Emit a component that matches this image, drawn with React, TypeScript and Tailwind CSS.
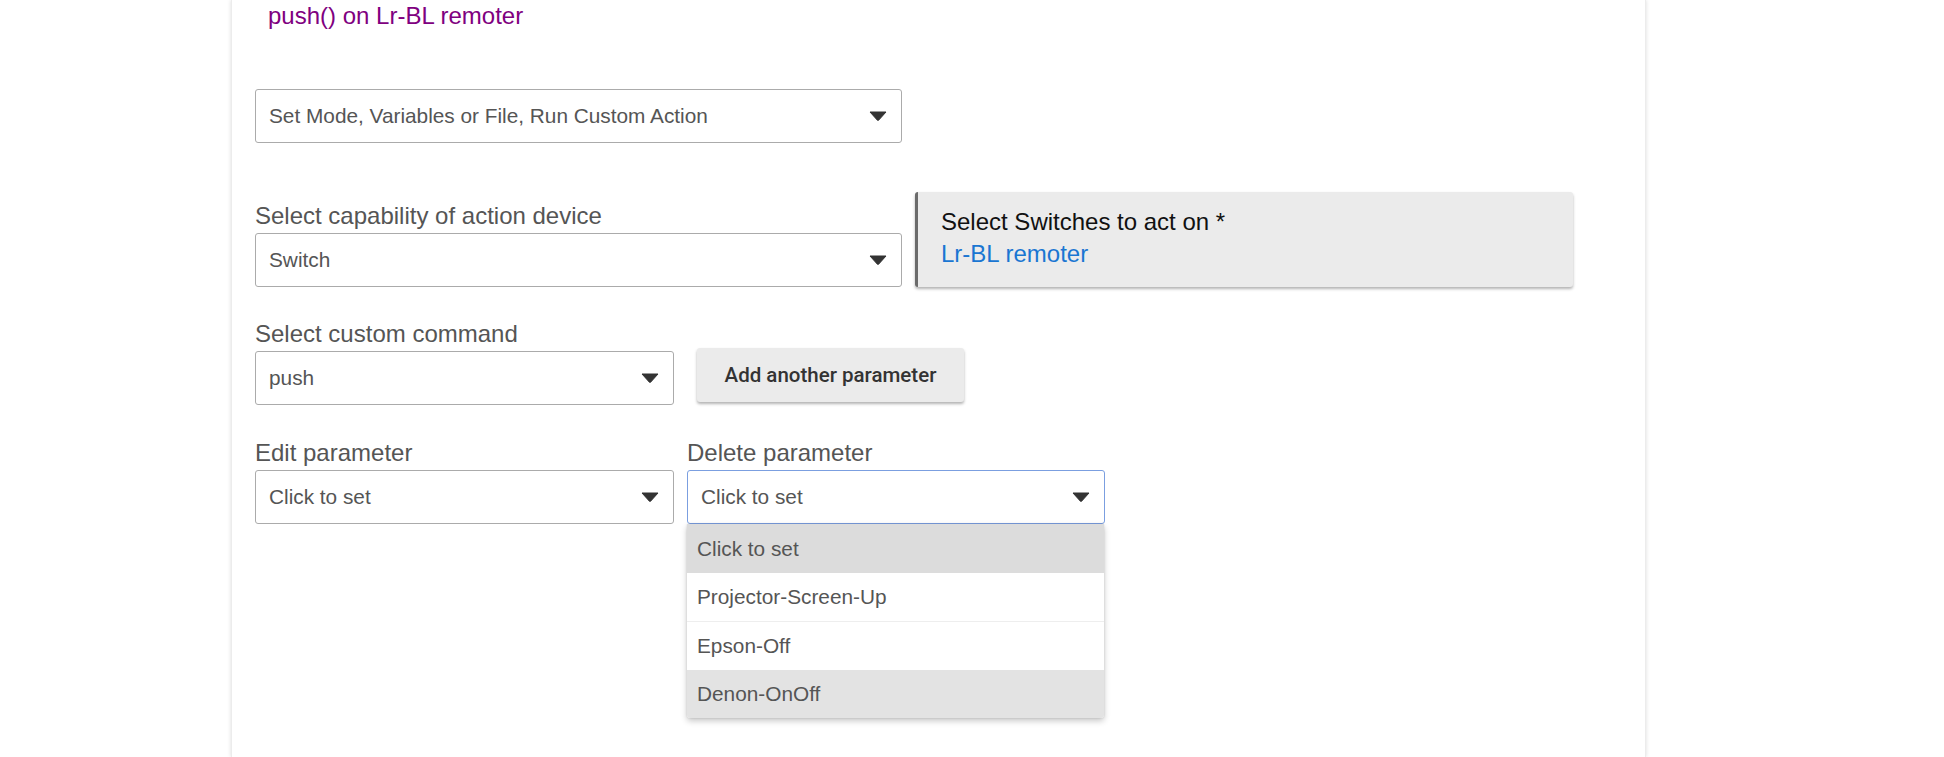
import React from "react";

function Arrow() {
  return (
    <svg width="18" height="10" viewBox="0 0 18 10" className="shrink-0">
      <path d="M1 1 L17 1 L9.6 9.2 Q9 9.8 8.4 9.2 Z" fill="#333" stroke="#333" strokeWidth="1" strokeLinejoin="round" />
    </svg>
  );
}

function Select({ value, className = "", focused = false }: { value: string; className?: string; focused?: boolean }) {
  return (
    <div
      className={
        "h-[54px] rounded-[3px] border bg-white pl-[13px] pr-[14px] flex items-center justify-between text-[20.8px] text-[#555] " +
        (focused ? "border-[#7b9fe0] " : "border-[#ababab] ") +
        className
      }
    >
      <span>{value}</span>
      <Arrow />
    </div>
  );
}

function Label({ children }: { children: React.ReactNode }) {
  return <div className="h-[28px] leading-[28px] text-[24px] text-[#555] mb-[3px] whitespace-nowrap">{children}</div>;
}

export default function App() {
  return (
    <div className="min-h-screen w-full bg-white overflow-hidden" style={{ fontFamily: '"Liberation Sans", Arial, sans-serif' }}>
      <div className="ml-[231px] w-[1415px] min-h-[757px] bg-white shadow-[0_0_4px_rgba(0,0,0,0.14)] border-x border-[#ececec] pl-[23px] pt-[2px]">
        <div className="pl-[13px] text-[24px] leading-[28px] text-[#800080]">push() on Lr-BL remoter</div>

        <div className="mt-[59px] w-[647px]">
          <Select value="Set Mode, Variables or File, Run Custom Action" />
        </div>

        <div className="mt-[49px] flex items-end gap-[13px]">
          <div className="w-[647px]">
            <Label>Select capability of action device</Label>
            <Select value="Switch" />
          </div>
          <div className="w-[658px] h-[95px] bg-[#ebebeb] border-l-[3px] border-[#6b6b6b] rounded-[3px] shadow-[0_2px_3px_rgba(0,0,0,0.3)] pl-[23px] pt-[14px] text-[24px] leading-[32px]">
            <div className="text-[#111]">Select Switches to act on *</div>
            <div className="text-[#1a76d2]">Lr-BL remoter</div>
          </div>
        </div>

        <div className="mt-[33px] flex items-end gap-[23px]">
          <div className="w-[419px]">
            <Label>Select custom command</Label>
            <Select value="push" />
          </div>
          <div
            className="mb-[3px] h-[54px] w-[267px] rounded-[3px] bg-[#ebebeb] shadow-[0_2px_3px_rgba(0,0,0,0.3)] flex items-center justify-center text-[20.5px] font-medium text-[#333]"
            style={{ fontFamily: 'Roboto, "Liberation Sans", sans-serif' }}
          >
            Add another parameter
          </div>
        </div>

        <div className="mt-[34px] flex gap-[13px]">
          <div className="w-[419px]">
            <Label>Edit parameter</Label>
            <Select value="Click to set" />
          </div>
          <div className="w-[418px] relative">
            <Label>Delete parameter</Label>
            <Select value="Click to set" focused />
            <div className="absolute left-0 top-full w-[417px] bg-white rounded-b-[3px] shadow-[0_3px_6px_rgba(0,0,0,0.22),0_0_2px_rgba(0,0,0,0.15)] text-[20.8px] text-[#555]">
              <div className="h-[49px] bg-[#dcdcdc] pl-[10px] flex items-center">Click to set</div>
              <div className="h-[48px] pl-[10px] flex items-center">Projector-Screen-Up</div>
              <div className="h-[49px] pl-[10px] flex items-center border-t border-[#eeeeee]">Epson-Off</div>
              <div className="h-[48px] bg-[#e3e3e3] pl-[10px] flex items-center rounded-b-[3px]">Denon-OnOff</div>
            </div>
          </div>
        </div>
      </div>
    </div>
  );
}
